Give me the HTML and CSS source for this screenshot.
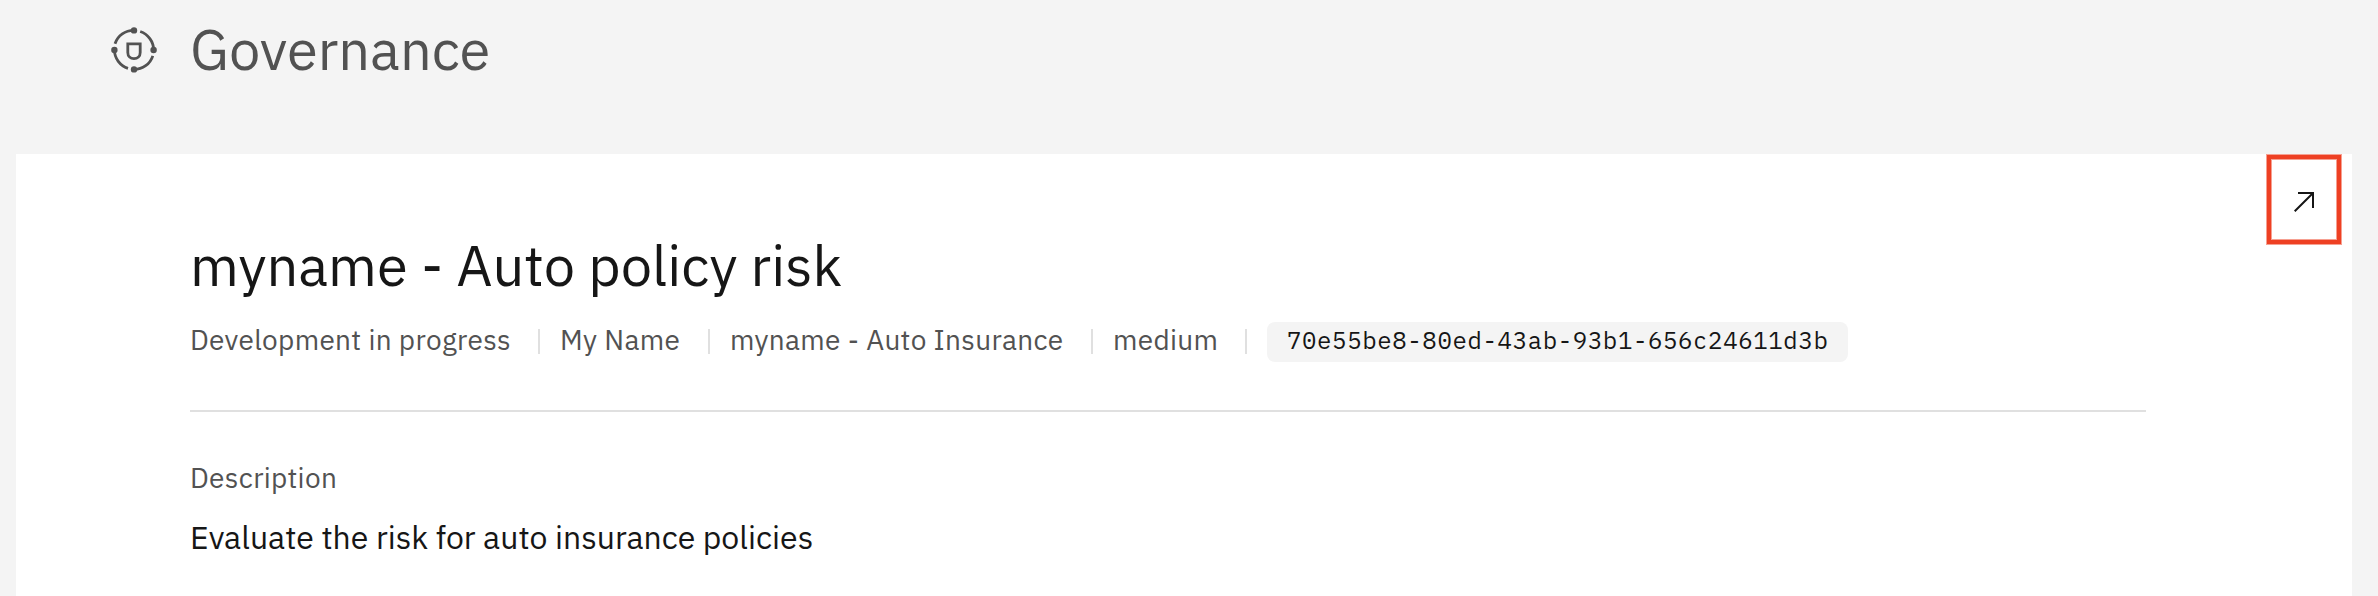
FILE: index.html
```html
<!DOCTYPE html>
<html lang="en">
<head>
<meta charset="utf-8">
<title>Governance</title>
<link rel="stylesheet" href="styles.css">
</head>
<body>
<header class="page-header">
  <svg class="page-icon" viewBox="0 0 48 48" fill="none" stroke="#525252" stroke-width="2.8">
    <path d="M5 17.8A19.6 19.6 0 0 1 24 4.4M30.2 5.5A19.6 19.6 0 0 1 43.6 24M42.8 29.8A19.6 19.6 0 0 1 24 43.5M18 42.3A19.6 19.6 0 0 1 4.4 24"/>
    <path d="M17.8 17.8H30.2V26.5C30.2 30.5 27.5 32.7 24 32.7S17.8 30.5 17.8 26.5Z"/>
    <g fill="#525252" stroke="none"><circle cx="24" cy="4.4" r="3.2"/><circle cx="43.6" cy="24" r="3.2"/><circle cx="24" cy="43.4" r="3.2"/><circle cx="4.4" cy="24" r="3.2"/></g>
  </svg>
  <h1 class="page-title">Governance</h1>
</header>
<main class="panel">
  <button class="open-button" aria-label="Open">
    <svg class="open-icon" viewBox="0 0 32 32" fill="#161616"><path d="M10 6V8H22.59L6 24.59 7.41 26 24 9.41V22H26V6Z"/></svg>
  </button>
  <h2 class="title">myname - Auto policy risk</h2>
  <div class="meta">
    <span class="meta-item status">Development in progress</span>
    <span class="meta-item owner">My Name</span>
    <span class="meta-item case">myname - Auto Insurance</span>
    <span class="meta-item risk">medium</span>
    <code class="tag">70e55be8-80ed-43ab-93b1-656c24611d3b</code>
  </div>
  <section class="details">
    <h3 class="label">Description</h3>
    <p class="description">Evaluate the risk for auto insurance policies</p>
  </section>
</main>
</body>
</html>
```
FILE: styles.css
```css
* { box-sizing: border-box; }
body {
  margin: 0;
  height: 596px;
  overflow: hidden;
  background: #f4f4f4;
  color: #161616;
  font-family: "IBM Plex Sans", Roboto, sans-serif;
}
h1, h2, h3, p { margin: 0; font-weight: 400; white-space: nowrap; }
.page-header {
  display: flex;
  height: 154px;
  padding: 18px 0 0 110px;
  gap: 32px;
  color: #525252;
}
.page-icon { width: 48px; height: 48px; margin-top: 8px; }
.page-title { font-size: 56px; line-height: 62px; }
.panel {
  position: relative;
  height: 442px;
  margin: 0 26px 0 16px;
  padding: 80px 206px 0 174px;
  background: #fff;
}
.open-button {
  position: absolute;
  top: 0;
  right: 10px;
  display: flex;
  align-items: center;
  justify-content: center;
  width: 76px;
  height: 91px;
  padding: 4px 0 0;
  border: 1px solid #f6a091;
  box-shadow: inset 0 0 0 4px #ee4023, inset 0 0 0 5px #f6a091;
  background: #fff;
}
.open-icon { width: 32px; height: 32px; }
.title { height: 64px; font-size: 56px; line-height: 62px; }
.meta {
  display: flex;
  height: 114px;
  padding-top: 24px;
  border-bottom: 2px solid #e0e0e0;
  align-items: flex-start;
}
.meta-item {
  height: 25px;
  margin: 7px 20px 0 0;
  border-right: 2px solid #e0e0e0;
  color: #525252;
  font-size: 28px;
  line-height: 22px;
  letter-spacing: .32px;
  white-space: nowrap;
}
.status { width: 350px; }
.owner { width: 150px; }
.case { width: 363px; }
.risk { width: 134px; }
.tag {
  width: 581px;
  height: 40px;
  padding: 0 20px;
  border-radius: 8px;
  background: #f4f4f4;
  font-family: "IBM Plex Mono", "Liberation Mono", monospace;
  font-size: 24px;
  line-height: 36px;
  letter-spacing: .64px;
  white-space: nowrap;
}
.details { padding-top: 48px; }
.label { color: #525252; font-size: 28px; line-height: 36px; letter-spacing: .32px; }
.description { margin-top: 20px; font-size: 32px; line-height: 42px; }
```
